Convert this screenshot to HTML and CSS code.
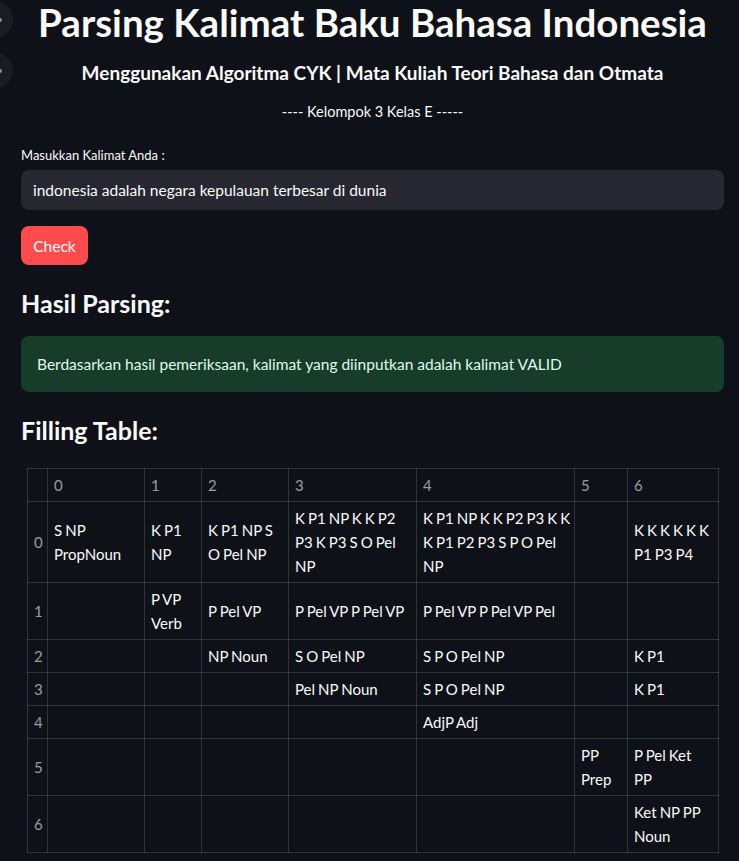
FILE: index.html
```html
<!DOCTYPE html>
<html lang="id">
<head>
<meta charset="utf-8">
<title>Parsing Kalimat Baku Bahasa Indonesia</title>
<link rel="stylesheet" href="styles.css">
</head>
<body>
<div class="side-btns">
  <span class="side-btn"><span class="side-dot"></span></span>
  <span class="side-btn"><span class="side-dot"></span></span>
</div>
<main class="main">
  <h1 class="title">Parsing Kalimat Baku Bahasa Indonesia</h1>
  <h4 class="subtitle">Menggunakan Algoritma CYK | Mata Kuliah Teori Bahasa dan Otmata</h4>
  <p class="group">---- Kelompok 3 Kelas E -----</p>
  <label class="label" for="kalimat">Masukkan Kalimat Anda :</label>
  <div class="input"><input id="kalimat" class="input-field" type="text" value="indonesia adalah negara kepulauan terbesar di dunia"></div>
  <button class="btn" type="button">Check</button>
  <h3 class="heading heading-first">Hasil Parsing:</h3>
  <div class="alert">Berdasarkan hasil pemeriksaan, kalimat yang diinputkan adalah kalimat VALID</div>
  <h3 class="heading">Filling Table:</h3>
  <table class="cyk">
    <colgroup>
      <col class="c-idx"><col class="c0"><col class="c1"><col class="c2"><col class="c3"><col class="c4"><col class="c5"><col class="c6">
    </colgroup>
    <thead>
      <tr><th></th><th>0</th><th>1</th><th>2</th><th>3</th><th>4</th><th>5</th><th>6</th></tr>
    </thead>
    <tbody>
      <tr><th>0</th><td>S NP<br>PropNoun</td><td>K P1<br>NP</td><td>K P1 NP S<br>O Pel NP</td><td>K P1 NP K K P2<br>P3 K P3 S O Pel<br>NP</td><td>K P1 NP K K P2 P3 K K<br>K P1 P2 P3 S P O Pel<br>NP</td><td></td><td>K K K K K K<br>P1 P3 P4</td></tr>
      <tr><th>1</th><td></td><td>P VP<br>Verb</td><td>P Pel VP</td><td>P Pel VP P Pel VP</td><td>P Pel VP P Pel VP Pel</td><td></td><td></td></tr>
      <tr><th>2</th><td></td><td></td><td>NP Noun</td><td>S O Pel NP</td><td>S P O Pel NP</td><td></td><td>K P1</td></tr>
      <tr><th>3</th><td></td><td></td><td></td><td>Pel NP Noun</td><td>S P O Pel NP</td><td></td><td>K P1</td></tr>
      <tr><th>4</th><td></td><td></td><td></td><td></td><td>AdjP Adj</td><td></td><td></td></tr>
      <tr><th>5</th><td></td><td></td><td></td><td></td><td></td><td>PP<br>Prep</td><td>P Pel Ket<br>PP</td></tr>
      <tr><th>6</th><td></td><td></td><td></td><td></td><td></td><td></td><td>Ket NP PP<br>Noun</td></tr>
    </tbody>
  </table>
</main>
</body>
</html>
```
FILE: styles.css
```css
* { box-sizing: border-box; }
html, body { margin: 0; padding: 0; }
body {
  background: #0e1117;
  color: #fafafa;
  font-family: Lato, "Noto Sans", sans-serif;
  overflow: hidden;
}
.side-btns {
  position: absolute;
  left: -24px;
  top: 1px;
  display: flex;
  flex-direction: column;
  gap: 14px;
}
.side-btn {
  width: 37px;
  height: 37px;
  border-radius: 50%;
  background: #1a1c24;
  display: flex;
  align-items: center;
  justify-content: flex-end;
}
.side-dot {
  width: 4px;
  height: 4px;
  border-radius: 50%;
  background: #8c8e96;
  margin-right: 11px;
}
.main {
  padding: 0 15px 0 21px;
}
.title {
  margin: 0;
  font-size: 38.5px;
  line-height: 44px;
  font-weight: 700;
  text-align: center;
}
.subtitle {
  margin: 17px 0 0;
  font-size: 19px;
  line-height: 24px;
  font-weight: 700;
  text-align: center;
}
.group {
  margin: 16px 0 0;
  font-size: 14.5px;
  line-height: 22px;
  text-align: center;
}
.label {
  display: block;
  margin-top: 22px;
  font-size: 13px;
  line-height: 20px;
}
.input {
  margin-top: 5px;
  height: 40px;
  background: #262730;
  border-radius: 8px;
  display: flex;
  align-items: center;
}
.input-field {
  flex: 1;
  border: 0;
  outline: 0;
  background: transparent;
  color: #fafafa;
  font: 15.5px Lato, "Noto Sans", sans-serif;
  padding: 0 12px;
}
.btn {
  display: block;
  margin-top: 16px;
  height: 39px;
  width: 67px;
  border: 0;
  border-radius: 8px;
  background: #ff4b4b;
  color: #fff;
  font: 15.5px Lato, "Noto Sans", sans-serif;
  padding: 0;
}
.heading {
  margin: 20px 0 0;
  font-size: 25px;
  line-height: 36px;
  font-weight: 700;
}
.alert {
  margin-top: 15px;
  padding: 16px;
  line-height: 24px;
  font-size: 15.5px;
  background: #173c29;
  color: #dffde9;
  border-radius: 8px;
}
.cyk {
  margin: 20px 0 0 6px;
  width: 691px;
  border-collapse: collapse;
  table-layout: fixed;
  font-size: 15px;
  line-height: 24px;
  word-spacing: -0.8px;
}
.cyk th, .cyk td {
  border: 1px solid rgba(250, 250, 250, 0.15);
  padding: 4px 6px;
  text-align: left;
  vertical-align: middle;
  font-weight: 400;
  white-space: nowrap;
}
.cyk th { color: rgba(250, 250, 250, 0.6); }
.cyk td { color: #fafafa; }
.c-idx { width: 20px; }
.c0 { width: 97px; }
.c1 { width: 57px; }
.c2 { width: 87px; }
.c3 { width: 128px; }
.c4 { width: 158px; }
.c5 { width: 53px; }
.c6 { width: 91px; }
```
